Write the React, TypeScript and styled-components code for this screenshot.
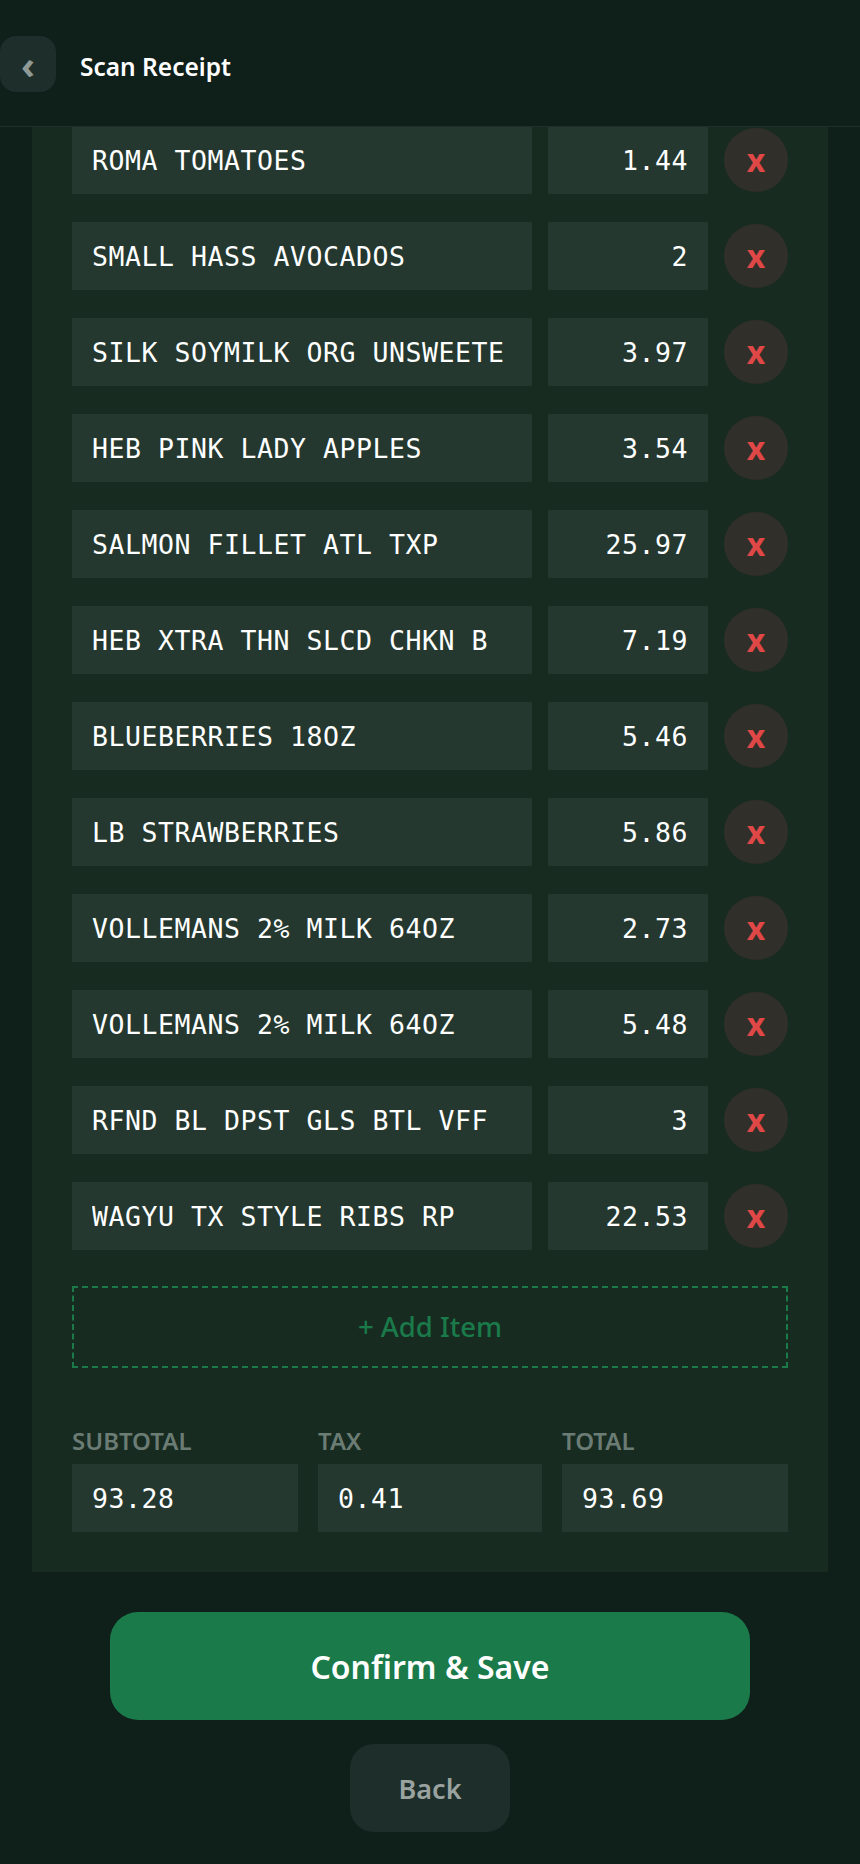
import React from "react";
import styled, { createGlobalStyle } from "styled-components";

const Global = createGlobalStyle`
  html, body { margin: 0; padding: 0; background: #0f1f1a; }
  * { box-sizing: border-box; }
`;

const SANS = `"Noto Sans", "Open Sans", sans-serif`;
const MONO = `"DejaVu Sans Mono", "Liberation Mono", monospace`;

const Page = styled.div`
  width: 860px;
  height: 1864px;
  overflow: hidden;
  display: flex;
  flex-direction: column;
  background: #0f1f1a;
  font-family: ${SANS};
`;

const Header = styled.header`
  position: relative;
  z-index: 1;
  height: 127px;
  flex: none;
  display: flex;
  align-items: center;
  gap: 24px;
  background: #0f1f1a;
  border-bottom: 1px solid #1f2f2a;
`;

const BackIcon = styled.button`
  width: 56px;
  height: 56px;
  flex: none;
  margin-top: 2px;
  border: 0;
  padding: 0;
  border-radius: 16px;
  background: #1e2e2a;
  color: #8f9a96;
  font: 700 38px/1 ${SANS};
  display: flex;
  align-items: center;
  justify-content: center;
`;

const Title = styled.h1`
  margin: 8px 0 0;
  color: #fff;
  font: 600 24.5px/1 ${SANS};
`;

const Card = styled.section`
  margin: -1px 32px 0;
  padding: 0 40px 40px;
  background: #172b21;
  display: flex;
  flex-direction: column;
`;

const Items = styled.div`
  display: flex;
  flex-direction: column;
  gap: 28px;
`;

const Row = styled.div`
  display: grid;
  grid-template-columns: 460px 160px 64px;
  column-gap: 16px;
  align-items: center;
`;

const Field = styled.input<{ $right?: boolean }>`
  width: 100%;
  height: 68px;
  border: 0;
  outline: 0;
  padding: 0 20px;
  background: #243830;
  color: #fff;
  font: 400 26.5px/1 ${MONO};
  letter-spacing: 0.55px;
  text-align: ${(p) => (p.$right ? "right" : "left")};
`;

const Delete = styled.button`
  width: 64px;
  height: 64px;
  border: 0;
  padding: 0;
  border-radius: 50%;
  background: #302f29;
  color: #e04848;
  font: 700 32px/1 ${SANS};
`;

const AddItem = styled.button`
  margin-top: 36px;
  height: 82px;
  border: 2px dashed #1a7a4a;
  padding: 0;
  background: transparent;
  color: #1a7a4a;
  font: 500 27.5px/1 ${SANS};
`;

const Totals = styled.div`
  margin-top: 57px;
  display: grid;
  grid-template-columns: 226px 224px 226px;
  column-gap: 20px;
`;

const Total = styled.label`
  display: flex;
  flex-direction: column;
  gap: 7px;
`;

const TotalLabel = styled.span`
  color: #6b7c75;
  font: 600 24px/32px ${SANS};
`;

const Actions = styled.div`
  margin-top: 40px;
  display: flex;
  flex-direction: column;
  align-items: center;
  gap: 24px;
`;

const Confirm = styled.button`
  width: 640px;
  height: 108px;
  border: 0;
  padding: 2px 0 0;
  border-radius: 28px;
  background: #1a7a4a;
  color: #fff;
  font: 600 32px/1 ${SANS};
`;

const Back = styled.button`
  width: 160px;
  height: 88px;
  border: 0;
  border-radius: 24px;
  background: #1e2e2a;
  color: #9aa3a0;
  font: 600 27px/1 ${SANS};
`;

const items: [string, string][] = [
  ["ROMA TOMATOES", "1.44"],
  ["SMALL HASS AVOCADOS", "2"],
  ["SILK SOYMILK ORG UNSWEETE", "3.97"],
  ["HEB PINK LADY APPLES", "3.54"],
  ["SALMON FILLET ATL TXP", "25.97"],
  ["HEB XTRA THN SLCD CHKN B", "7.19"],
  ["BLUEBERRIES 18OZ", "5.46"],
  ["LB STRAWBERRIES", "5.86"],
  ["VOLLEMANS 2% MILK 64OZ", "2.73"],
  ["VOLLEMANS 2% MILK 64OZ", "5.48"],
  ["RFND BL DPST GLS BTL VFF", "3"],
  ["WAGYU TX STYLE RIBS RP", "22.53"],
];

const totals: [string, string][] = [
  ["SUBTOTAL", "93.28"],
  ["TAX", "0.41"],
  ["TOTAL", "93.69"],
];

export default function App() {
  return (
    <Page>
      <Global />
      <Header>
        <BackIcon>‹</BackIcon>
        <Title>Scan Receipt</Title>
      </Header>
      <Card>
        <Items>
          {items.map(([name, price], i) => (
            <Row key={i}>
              <Field readOnly value={name} />
              <Field readOnly $right value={price} />
              <Delete>x</Delete>
            </Row>
          ))}
        </Items>
        <AddItem>+ Add Item</AddItem>
        <Totals>
          {totals.map(([label, value]) => (
            <Total key={label}>
              <TotalLabel>{label}</TotalLabel>
              <Field readOnly value={value} />
            </Total>
          ))}
        </Totals>
      </Card>
      <Actions>
        <Confirm>Confirm &amp; Save</Confirm>
        <Back>Back</Back>
      </Actions>
    </Page>
  );
}
